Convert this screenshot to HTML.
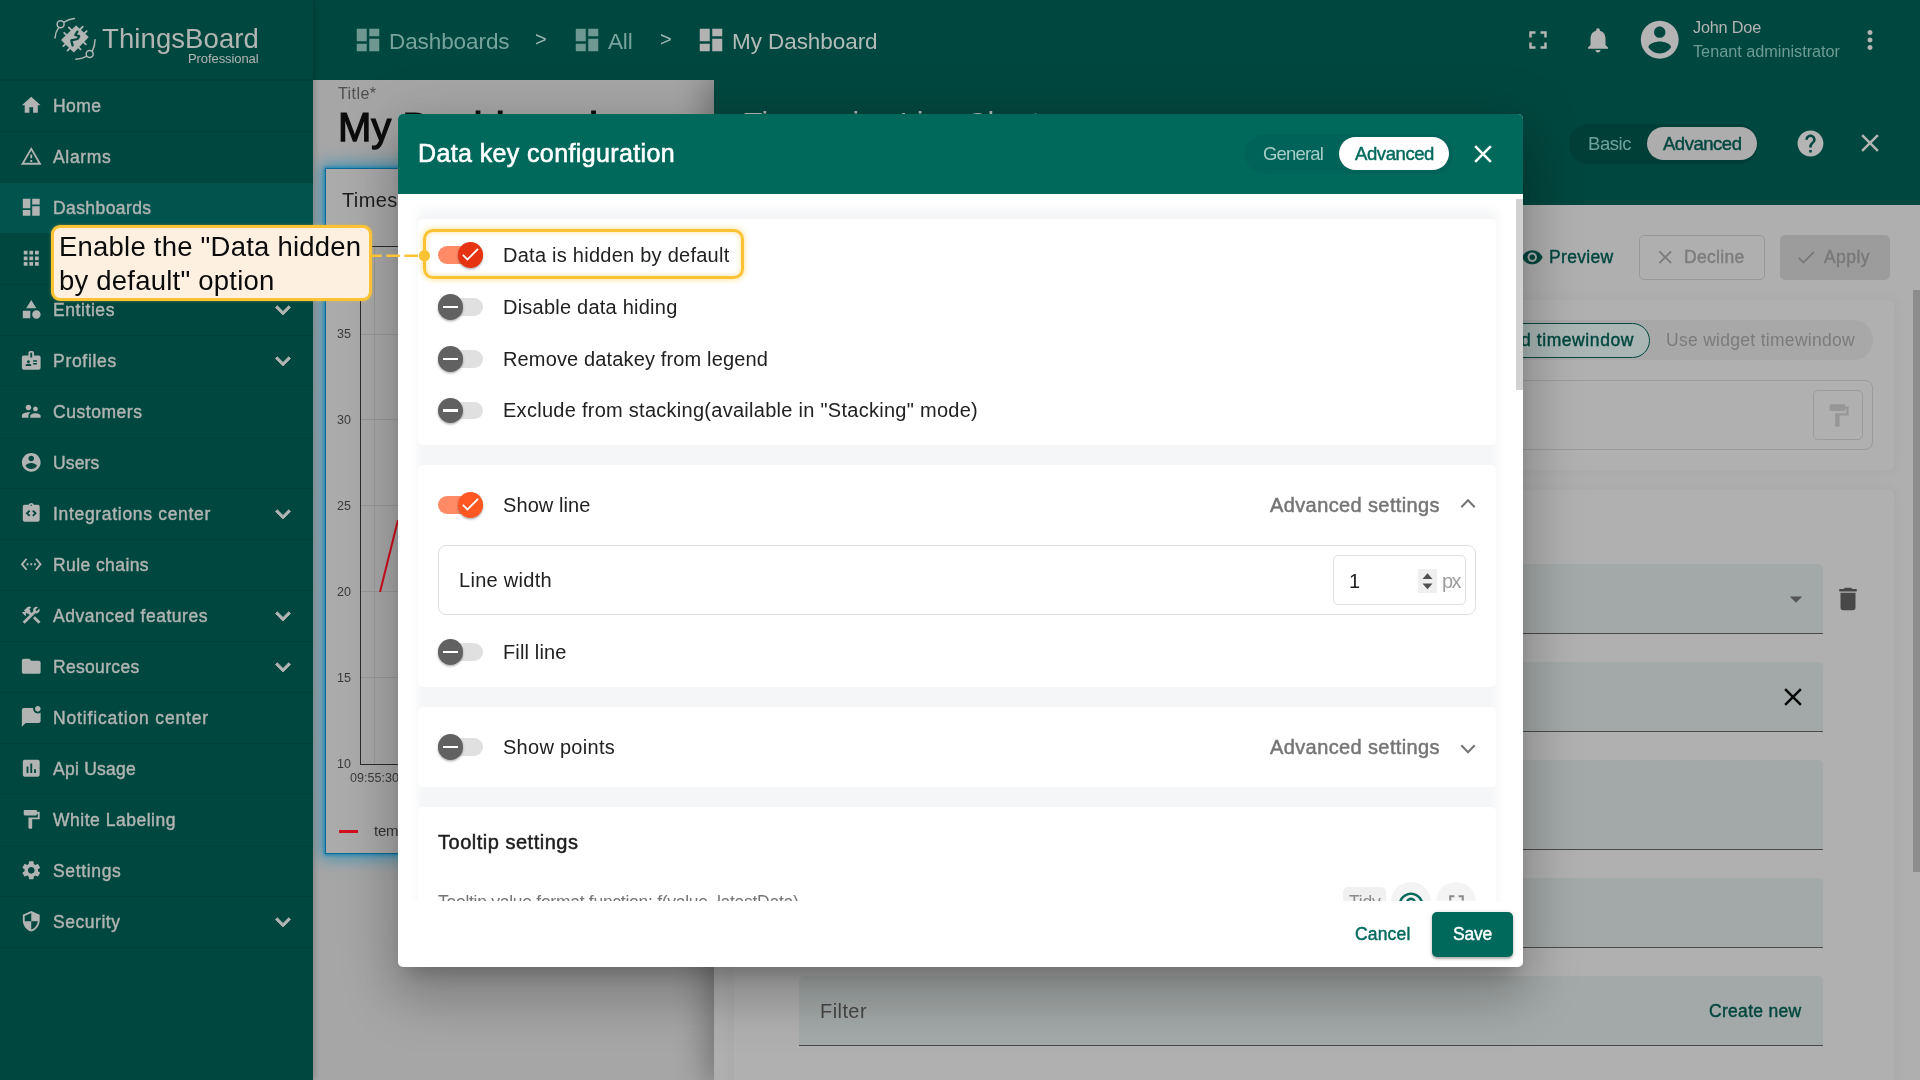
<!DOCTYPE html>
<html lang="en"><head><meta charset="utf-8"><title>ThingsBoard - Data key configuration</title>
<style>
html,body{margin:0;padding:0}
body{width:1920px;height:1080px;overflow:hidden;position:relative;background:#a5a5a5;font-family:"Liberation Sans",sans-serif}
div,span,svg{position:absolute;box-sizing:border-box}
span{white-space:nowrap;display:block;will-change:transform}
.clip{overflow:hidden}
</style></head><body>

<div style="left:313px;top:80px;width:401px;height:1000px;background:#a6a6a6"></div>
<span style="left:338px;top:83.00px;line-height:21px;font-size:16px;color:#4f4f4f;letter-spacing:0.440px;">Title*</span>
<span style="left:338.3px;top:102.00px;line-height:50px;font-size:40px;color:#0c0c0c;-webkit-text-stroke:1.25px #0c0c0c;">My Dashboard</span>
<div style="left:324.8px;top:167.5px;width:420px;height:686.5px;background:#ababab;border:1px solid #0a6a98;box-shadow:0 0 15px 4px rgba(45,145,185,.85), 0 0 3px 1px #0d78a8"></div>
<span style="left:341.7px;top:187.00px;line-height:26px;font-size:20px;color:#1d1d1d;letter-spacing:.4px;">Timeseries Line Chart</span>
<span style="left:337px;top:326.20px;line-height:16px;font-size:12.5px;color:#3a3a3a;letter-spacing:0.048px;">35</span>
<div style="left:361px;top:334px;width:60px;height:1px;background:#9b9b9b"></div>
<span style="left:337px;top:412.10px;line-height:16px;font-size:12.5px;color:#3a3a3a;letter-spacing:0.048px;">30</span>
<div style="left:361px;top:419px;width:60px;height:1px;background:#9b9b9b"></div>
<span style="left:337px;top:498.00px;line-height:16px;font-size:12.5px;color:#3a3a3a;letter-spacing:0.048px;">25</span>
<div style="left:361px;top:505px;width:60px;height:1px;background:#9b9b9b"></div>
<span style="left:337px;top:583.90px;line-height:16px;font-size:12.5px;color:#3a3a3a;letter-spacing:0.048px;">20</span>
<div style="left:361px;top:591px;width:60px;height:1px;background:#9b9b9b"></div>
<span style="left:337px;top:669.80px;line-height:16px;font-size:12.5px;color:#3a3a3a;letter-spacing:0.048px;">15</span>
<div style="left:361px;top:677px;width:60px;height:1px;background:#9b9b9b"></div>
<span style="left:337px;top:755.70px;line-height:16px;font-size:12.5px;color:#3a3a3a;letter-spacing:0.048px;">10</span>
<div style="left:360px;top:246px;width:1px;height:519px;background:#2b2b2b"></div>
<div style="left:360px;top:246px;width:60px;height:1px;background:#2b2b2b"></div>
<div style="left:360px;top:764px;width:60px;height:1px;background:#2b2b2b"></div>
<div style="left:374px;top:247px;width:1px;height:517px;background:#9b9b9b"></div>
<svg style="left:370px;top:500px" width="40" height="100" viewBox="0 0 40 100"><path d="M10 92 L28 20" stroke="#d3101e" stroke-width="2" fill="none"/></svg>
<span style="left:349.5px;top:769.50px;line-height:16px;font-size:12.5px;color:#3a3a3a;letter-spacing:0.043px;">09:55:30</span>
<div style="left:339px;top:830px;width:19px;height:3.2px;background:#d3101e"></div>
<span style="left:374px;top:821.00px;line-height:20px;font-size:15px;color:#333;letter-spacing:-0.262px;">temperature</span>
<div style="left:714px;top:80px;width:1206px;height:1000px;background:#afafaf;box-shadow:-4px 0 30px 4px rgba(0,0,0,.30)"></div>
<div style="left:714px;top:80px;width:1206px;height:125px;background:#00473f"></div>
<span style="left:744px;top:103.00px;line-height:40px;font-size:30px;color:#b4b4b4;letter-spacing:0.175px;">Timeseries Line Chart</span>
<div style="left:1569px;top:123.5px;width:189px;height:40px;background:#003f38;border-radius:20px"></div>
<span style="left:1587.5px;top:131.50px;line-height:24px;font-size:18.5px;color:#6fa39c;letter-spacing:-0.448px;">Basic</span>
<div style="left:1647px;top:126.5px;width:110px;height:33px;background:#adadad;border-radius:17px"></div>
<span style="left:1662.5px;top:131.50px;line-height:24px;font-size:18.5px;color:#00473f;-webkit-text-stroke:0.44px #00473f;letter-spacing:-0.473px;">Advanced</span>
<svg style="left:1794.50px;top:127.50px;" width="31" height="31" viewBox="0 0 24 24"><path fill="#b4b4b4" d="M12 2C6.48 2 2 6.48 2 12s4.48 10 10 10 10-4.48 10-10S17.52 2 12 2zm1 17h-2v-2h2v2zm2.07-7.75l-.9.92C13.45 12.9 13 13.5 13 15h-2v-.5c0-1.1.45-2.1 1.17-2.83l1.24-1.26c.37-.36.59-.86.59-1.41 0-1.1-.9-2-2-2s-2 .9-2 2H8c0-2.21 1.79-4 4-4s4 1.79 4 4c0 .88-.36 1.68-.93 2.25z"/></svg>
<svg style="left:1855.00px;top:128.00px;" width="30" height="30" viewBox="0 0 24 24"><path fill="#b4b4b4" d="M19 6.41L17.59 5 12 10.59 6.41 5 5 6.41 10.59 12 5 17.59 6.41 19 12 13.41 17.59 19 19 17.59 13.41 12z"/></svg>
<svg style="left:1520.75px;top:245.75px;" width="22.5" height="22.5" viewBox="0 0 24 24"><path fill="#00473f" d="M12 4.5C7 4.5 2.73 7.61 1 12c1.73 4.39 6 7.5 11 7.5s9.27-3.11 11-7.5c-1.73-4.39-6-7.5-11-7.5zM12 17c-2.76 0-5-2.24-5-5s2.24-5 5-5 5 2.24 5 5-2.24 5-5 5zm0-8c-1.66 0-3 1.34-3 3s1.34 3 3 3 3-1.34 3-3-1.34-3-3-3z"/></svg>
<span style="left:1549px;top:246.00px;line-height:23px;font-size:17.5px;color:#00473f;-webkit-text-stroke:0.42px #00473f;letter-spacing:0.322px;">Preview</span>
<div style="left:1639px;top:235px;width:126px;height:45px;border:1px solid #989898;border-radius:5px"></div>
<svg style="left:1654.25px;top:245.75px;" width="22.5" height="22.5" viewBox="0 0 24 24"><path fill="#7c7c7c" d="M19 6.41L17.59 5 12 10.59 6.41 5 5 6.41 10.59 12 5 17.59 6.41 19 12 13.41 17.59 19 19 17.59 13.41 12z"/></svg>
<span style="left:1683.5px;top:246.00px;line-height:23px;font-size:17.5px;color:#7c7c7c;-webkit-text-stroke:0.42px #7c7c7c;letter-spacing:0.305px;">Decline</span>
<div style="left:1780px;top:235px;width:110px;height:45px;background:#9c9c9c;border-radius:5px"></div>
<svg style="left:1794.75px;top:245.75px;" width="22.5" height="22.5" viewBox="0 0 24 24"><path fill="#787878" d="M9 16.17L4.83 12l-1.42 1.41L9 19 21 7l-1.41-1.41z"/></svg>
<span style="left:1823.5px;top:246.00px;line-height:23px;font-size:17.5px;color:#787878;-webkit-text-stroke:0.42px #787878;letter-spacing:0.445px;">Apply</span>
<div style="left:734px;top:300px;width:1160px;height:170px;background:#b0b0b0;border-radius:5px;box-shadow:0 0 10px 5px rgba(0,0,0,.022)"></div>
<div style="left:734px;top:489.5px;width:1160px;height:640px;background:#b0b0b0;border-radius:5px;box-shadow:0 0 10px 5px rgba(0,0,0,.022)"></div>
<div style="left:1300px;top:320px;width:573px;height:40px;background:#a8a8a8;border-radius:20px"></div>
<div style="left:1350px;top:323px;width:300px;height:34.5px;background:#a9b6b4;border:1.5px solid #00473f;border-radius:18px"></div>
<span style="left:1405px;top:329.00px;line-height:23px;font-size:17.5px;color:#00473f;-webkit-text-stroke:0.42px #00473f;letter-spacing:0.584px;">Use dashboard timewindow</span>
<span style="left:1665.5px;top:329.00px;line-height:23px;font-size:17.5px;color:#7b7b7b;letter-spacing:0.293px;">Use widget timewindow</span>
<div style="left:754px;top:380px;width:1119px;height:69.5px;border:1px solid #9b9b9b;border-radius:8px"></div>
<div style="left:1813px;top:390px;width:50px;height:50px;border:1px solid #9b9b9b;border-radius:5px"></div>
<svg style="left:1824.50px;top:401.50px;" width="27" height="27" viewBox="0 0 24 24"><path fill="#979797" d="M18 4V3c0-.55-.45-1-1-1H5c-.55 0-1 .45-1 1v4c0 .55.45 1 1 1h12c.55 0 1-.45 1-1V6h1v4H9v11c0 .55.45 1 1 1h2c.55 0 1-.45 1-1v-9h8V4h-3z"/></svg>
<div style="left:799px;top:564px;width:1024px;height:69.5px;background:#a3a9a8;border-bottom:1px solid #4a4a4a;border-radius:5px 5px 0 0"></div>
<svg style="left:1781.00px;top:584.00px;" width="30" height="30" viewBox="0 0 24 24"><path fill="#555" d="M7 10l5 5 5-5z"/></svg>
<svg style="left:1832.50px;top:584.00px;" width="30" height="30" viewBox="0 0 24 24"><path fill="#484848" d="M6 19c0 1.1.9 2 2 2h8c1.1 0 2-.9 2-2V7H6v12zM19 4h-3.5l-1-1h-5l-1 1H5v2h14V4z"/></svg>
<div style="left:799px;top:662px;width:1024px;height:69.5px;background:#a3a9a8;border-bottom:1px solid #4a4a4a;border-radius:5px 5px 0 0"></div>
<svg style="left:1777.50px;top:682.00px;" width="30" height="30" viewBox="0 0 24 24"><path fill="#0a0a0a" d="M19 6.41L17.59 5 12 10.59 6.41 5 5 6.41 10.59 12 5 17.59 6.41 19 12 13.41 17.59 19 19 17.59 13.41 12z"/></svg>
<div style="left:799px;top:760px;width:1024px;height:89.5px;background:#a3a9a8;border-bottom:1px solid #4a4a4a;border-radius:5px 5px 0 0"></div>
<div style="left:799px;top:878px;width:1024px;height:69.5px;background:#a3a9a8;border-bottom:1px solid #4a4a4a;border-radius:5px 5px 0 0"></div>
<div style="left:799px;top:976px;width:1024px;height:69.5px;background:#a3a9a8;border-bottom:1px solid #4a4a4a;border-radius:5px 5px 0 0"></div>
<span style="left:819.5px;top:998.00px;line-height:26px;font-size:20px;color:#474747;letter-spacing:0.426px;">Filter</span>
<span style="left:1709px;top:999.50px;line-height:23px;font-size:17.5px;color:#00473f;-webkit-text-stroke:0.42px #00473f;letter-spacing:0.301px;">Create new</span>
<div style="left:1913px;top:290px;width:7px;height:582px;background:#8c8c8c"></div>
<div style="left:313px;top:0px;width:1607px;height:80px;background:#00473f"></div>
<svg style="left:352.50px;top:25.00px;" width="30" height="30" viewBox="0 0 24 24"><path fill="#6f9892" d="M3 13h8V3H3v10zm0 8h8v-6H3v6zm10 0h8V11h-8v10zm0-18v6h8V3h-8z"/></svg>
<span style="left:388.5px;top:27.00px;line-height:29px;font-size:22.5px;color:#78a39d;letter-spacing:-0.083px;">Dashboards</span>
<span style="left:535px;top:25.50px;line-height:26px;font-size:20px;color:#9db5b1;letter-spacing:-0.180px;">&gt;</span>
<svg style="left:571.50px;top:25.00px;" width="30" height="30" viewBox="0 0 24 24"><path fill="#6f9892" d="M3 13h8V3H3v10zm0 8h8v-6H3v6zm10 0h8V11h-8v10zm0-18v6h8V3h-8z"/></svg>
<span style="left:608px;top:27.00px;line-height:29px;font-size:22.5px;color:#78a39d;letter-spacing:-0.169px;">All</span>
<span style="left:659.5px;top:25.50px;line-height:26px;font-size:20px;color:#9db5b1;letter-spacing:-0.180px;">&gt;</span>
<svg style="left:695.50px;top:25.00px;" width="30" height="30" viewBox="0 0 24 24"><path fill="#b2b2b2" d="M3 13h8V3H3v10zm0 8h8v-6H3v6zm10 0h8V11h-8v10zm0-18v6h8V3h-8z"/></svg>
<span style="left:731.5px;top:27.00px;line-height:29px;font-size:22.5px;color:#b3bbb9;letter-spacing:-0.068px;">My Dashboard</span>
<svg style="left:1522.50px;top:25.00px;" width="30" height="30" viewBox="0 0 24 24"><path fill="#b4b4b4" d="M7 14H5v5h5v-2H7v-3zm-2-4h2V7h3V5H5v5zm12 7h-3v2h5v-5h-2v3zM14 5v2h3v3h2V5h-5z"/></svg>
<svg style="left:1582.50px;top:25.00px;" width="30" height="30" viewBox="0 0 24 24"><path fill="#b4b4b4" d="M12 22c1.1 0 2-.9 2-2h-4c0 1.1.89 2 2 2zm6-6v-5c0-3.07-1.64-5.64-4.5-6.32V4c0-.83-.67-1.5-1.5-1.5s-1.5.67-1.5 1.5v.68C7.63 5.36 6 7.92 6 11v5l-2 2v1h16v-1l-2-2z"/></svg>
<svg style="left:1637.25px;top:17.25px;" width="45.5" height="45.5" viewBox="0 0 24 24"><path fill="#b4b4b4" d="M12 2C6.48 2 2 6.48 2 12s4.48 10 10 10 10-4.48 10-10S17.52 2 12 2zm0 3c1.66 0 3 1.34 3 3s-1.34 3-3 3-3-1.34-3-3 1.34-3 3-3zm0 14.2c-2.5 0-4.71-1.28-6-3.22.03-1.99 4-3.08 6-3.08 1.99 0 5.97 1.09 6 3.08-1.29 1.94-3.5 3.22-6 3.22z"/></svg>
<span style="left:1692.5px;top:17.00px;line-height:21px;font-size:16.25px;color:#b4b4b4;letter-spacing:-0.195px;">John Doe</span>
<span style="left:1692.5px;top:41.00px;line-height:21px;font-size:16.25px;color:#6d9c95;letter-spacing:-0.012px;">Tenant administrator</span>
<svg style="left:1855.00px;top:25.00px;" width="30" height="30" viewBox="0 0 24 24"><path fill="#b4b4b4" d="M12 8c1.1 0 2-.9 2-2s-.9-2-2-2-2 .9-2 2 .9 2 2 2zm0 2c-1.1 0-2 .9-2 2s.9 2 2 2 2-.9 2-2-.9-2-2-2zm0 6c-1.1 0-2 .9-2 2s.9 2 2 2 2-.9 2-2-.9-2-2-2z"/></svg>
<div style="left:0px;top:0px;width:313px;height:1080px;background:#00473f;box-shadow:2px 0 6px rgba(0,0,0,.18)"></div>
<div style="left:0px;top:79px;width:313px;height:2px;background:rgba(0,0,0,.10)"></div>
<svg style="left:50px;top:14px" width="50" height="50" viewBox="0 0 50 50" fill="none" stroke="#b1b5b4" stroke-width="1.5" stroke-linecap="round">
<circle cx="10.6" cy="10.2" r="3.5"/>
<path d="M14 8.2 C17 6.2 20.4 5 24.4 4.6"/>
<path d="M8.6 13.6 C6.4 16.6 5.3 20 5 24"/>
<circle cx="39.7" cy="39.9" r="3.5"/>
<path d="M42.3 37 C44.2 33.4 45 29.6 45 25.7"/>
<path d="M36.5 42.4 C33.2 44.2 29.6 45 25.8 45.2"/>
<g stroke-width="1.8">
<path d="M21.7 16.3 L18.9 13.5"/><path d="M17 21.6 L14.2 18.8"/>
<path d="M30 15.5 L32.8 12.7"/><path d="M33.9 19.9 L36.7 17.1"/>
<path d="M16.1 29.3 L13.3 32.1"/><path d="M20.3 33.8 L17.5 36.6"/>
<path d="M33 27.6 L35.8 30.4"/><path d="M27.8 32.6 L30.6 35.4"/>
</g>
<path d="M11.9 26 L26.1 12.1 L38 23.2 L23.9 37.7 Z" fill="#b1b5b4" stroke-linejoin="round" stroke-width="1.2"/>
<path d="M27.4 17.6 L25.3 21 L29.2 22.2 L27.6 25 L21.3 26.4 L22.6 31.4" stroke="#00473f" stroke-width="2.3" stroke-linejoin="round"/>
</svg>
<span style="left:101.5px;top:21.50px;line-height:34px;font-size:27.5px;color:#b1b5b4;letter-spacing:0.097px;">ThingsBoard</span>
<span style="left:187.5px;top:50.50px;line-height:16px;font-size:13px;color:#b1b5b4;letter-spacing:-0.087px;">Professional</span>
<div style="left:0px;top:131px;width:313px;height:1px;background:rgba(0,0,0,.07)"></div>
<svg style="left:19.75px;top:94.25px;" width="22.5" height="22.5" viewBox="0 0 24 24"><path fill="#b1b4b3" d="M10 20v-6h4v6h5v-8h3L12 3 2 12h3v8z"/></svg>
<span style="left:52.5px;top:94.50px;line-height:23px;font-size:17.5px;color:#b1b4b3;-webkit-text-stroke:0.42px #b1b4b3;letter-spacing:0.454px;">Home</span>
<div style="left:0px;top:182px;width:313px;height:1px;background:rgba(0,0,0,.07)"></div>
<svg style="left:19.75px;top:145.25px;" width="22.5" height="22.5" viewBox="0 0 24 24"><path fill="#b1b4b3" d="M12 5.99L19.53 19H4.47L12 5.99M12 2L1 21h22L12 2zm1 14h-2v2h2v-2zm0-6h-2v4h2v-4z"/></svg>
<span style="left:52.5px;top:145.50px;line-height:23px;font-size:17.5px;color:#b1b4b3;-webkit-text-stroke:0.42px #b1b4b3;letter-spacing:0.675px;">Alarms</span>
<div style="left:0px;top:183px;width:313px;height:50px;background:#00544e"></div>
<svg style="left:19.75px;top:196.25px;" width="22.5" height="22.5" viewBox="0 0 24 24"><path fill="#b1b4b3" d="M3 13h8V3H3v10zm0 8h8v-6H3v6zm10 0h8V11h-8v10zm0-18v6h8V3h-8z"/></svg>
<span style="left:52.5px;top:196.50px;line-height:23px;font-size:17.5px;color:#b1b4b3;-webkit-text-stroke:0.42px #b1b4b3;letter-spacing:0.414px;">Dashboards</span>
<div style="left:0px;top:284px;width:313px;height:1px;background:rgba(0,0,0,.07)"></div>
<svg style="left:19.75px;top:247.25px;" width="22.5" height="22.5" viewBox="0 0 24 24"><path fill="#b1b4b3" d="M4 8h4V4H4v4zm6 12h4v-4h-4v4zm-6 0h4v-4H4v4zm0-6h4v-4H4v4zm6 0h4v-4h-4v4zm6-10v4h4V4h-4zm-6 4h4V4h-4v4zm6 6h4v-4h-4v4zm0 6h4v-4h-4v4z"/></svg>
<span style="left:52.5px;top:247.50px;line-height:23px;font-size:17.5px;color:#b1b4b3;-webkit-text-stroke:0.42px #b1b4b3;letter-spacing:0.335px;">Solution templates</span>
<div style="left:0px;top:335px;width:313px;height:1px;background:rgba(0,0,0,.07)"></div>
<svg style="left:19.75px;top:298.25px;" width="22.5" height="22.5" viewBox="0 0 24 24"><path fill="#b1b4b3" d="M12 2l-5.5 9h11L12 2zm5.5 11c-2.49 0-4.5 2.01-4.5 4.5s2.01 4.5 4.5 4.5 4.5-2.01 4.5-4.5-2.01-4.5-4.5-4.5zM3 21.5h8v-8H3v8z"/></svg>
<span style="left:52.5px;top:298.50px;line-height:23px;font-size:17.5px;color:#b1b4b3;-webkit-text-stroke:0.42px #b1b4b3;letter-spacing:0.576px;">Entities</span>
<svg style="left:267.5px;top:295.0px" width="30" height="30" viewBox="0 0 24 24"><path fill="#b1b4b3" stroke="#b1b4b3" stroke-width="0.7" d="M16.59 8.59L12 13.17 7.41 8.59 6 10l6 6 6-6z"/></svg>
<div style="left:0px;top:386px;width:313px;height:1px;background:rgba(0,0,0,.07)"></div>
<svg style="left:19.75px;top:349.25px;" width="22.5" height="22.5" viewBox="0 0 24 24"><path fill="#b1b4b3" d="M20 7h-5V4c0-1.1-.9-2-2-2h-2c-1.1 0-2 .9-2 2v3H4c-1.1 0-2 .9-2 2v11c0 1.1.9 2 2 2h16c1.1 0 2-.9 2-2V9c0-1.1-.9-2-2-2zM9 12c.83 0 1.5.67 1.5 1.5S9.83 15 9 15s-1.500-.67-1.500-1.500S8.170 12 9 12zm3 6H6v-.75c0-1 2-1.500 3-1.500s3 .5 3 1.500V18zm1-9h-2V4h2v5zm5 7.500h-4V15h4v1.500zm0-3h-4V12h4v1.500z"/></svg>
<span style="left:52.5px;top:349.50px;line-height:23px;font-size:17.5px;color:#b1b4b3;-webkit-text-stroke:0.42px #b1b4b3;letter-spacing:0.706px;">Profiles</span>
<svg style="left:267.5px;top:346.0px" width="30" height="30" viewBox="0 0 24 24"><path fill="#b1b4b3" stroke="#b1b4b3" stroke-width="0.7" d="M16.59 8.59L12 13.17 7.41 8.59 6 10l6 6 6-6z"/></svg>
<div style="left:0px;top:437px;width:313px;height:1px;background:rgba(0,0,0,.07)"></div>
<svg style="left:19.75px;top:400.25px;" width="22.5" height="22.5" viewBox="0 0 24 24"><path fill="#b1b4b3" d="M16.5 12c1.38 0 2.49-1.12 2.49-2.5S17.88 7 16.5 7C15.12 7 14 8.12 14 9.5s1.12 2.5 2.5 2.5zM9 11c1.66 0 2.99-1.34 2.99-3S10.66 5 9 5C7.34 5 6 6.34 6 8s1.34 3 3 3zm7.5 3c-1.83 0-5.5.92-5.5 2.75V19h11v-2.25c0-1.83-3.67-2.75-5.5-2.75zM9 13c-2.33 0-7 1.17-7 3.5V19h7v-2.25c0-.85.33-2.34 2.37-3.47C10.5 13.1 9.66 13 9 13z"/></svg>
<span style="left:52.5px;top:400.50px;line-height:23px;font-size:17.5px;color:#b1b4b3;-webkit-text-stroke:0.42px #b1b4b3;letter-spacing:0.544px;">Customers</span>
<div style="left:0px;top:488px;width:313px;height:1px;background:rgba(0,0,0,.07)"></div>
<svg style="left:19.75px;top:451.25px;" width="22.5" height="22.5" viewBox="0 0 24 24"><path fill="#b1b4b3" d="M12 2C6.48 2 2 6.48 2 12s4.48 10 10 10 10-4.48 10-10S17.52 2 12 2zm0 3c1.66 0 3 1.34 3 3s-1.34 3-3 3-3-1.34-3-3 1.34-3 3-3zm0 14.2c-2.5 0-4.71-1.28-6-3.22.03-1.99 4-3.08 6-3.08 1.99 0 5.97 1.09 6 3.08-1.29 1.94-3.5 3.22-6 3.22z"/></svg>
<span style="left:52.5px;top:451.50px;line-height:23px;font-size:17.5px;color:#b1b4b3;-webkit-text-stroke:0.42px #b1b4b3;letter-spacing:0.160px;">Users</span>
<div style="left:0px;top:539px;width:313px;height:1px;background:rgba(0,0,0,.07)"></div>
<svg style="left:19.75px;top:502.25px;" width="22.5" height="22.5" viewBox="0 0 24 24"><path fill="#b1b4b3" d="M19 3h-4.18C14.4 1.84 13.3 1 12 1s-2.4.84-2.82 2H5c-.14 0-.27.01-.4.04-.39.08-.74.28-1.01.55-.18.18-.33.4-.43.64-.1.23-.16.49-.16.77v14c0 .27.06.54.16.78s.25.45.43.64c.27.27.62.47 1.01.55.13.02.26.03.4.03h14c1.1 0 2-.9 2-2V5c0-1.1-.9-2-2-2zm-8 11.17l-1.41 1.42L6 12l3.59-3.59L11 9.83 8.83 12 11 14.17zm1-9.92c-.41 0-.75-.34-.75-.75s.34-.75.75-.75.75.34.75.75-.34.75-.75.75zm2.41 11.34L13 14.17 15.17 12 13 9.83l1.41-1.42L18 12l-3.59 3.59z"/></svg>
<span style="left:52.5px;top:502.50px;line-height:23px;font-size:17.5px;color:#b1b4b3;-webkit-text-stroke:0.42px #b1b4b3;letter-spacing:0.687px;">Integrations center</span>
<svg style="left:267.5px;top:499.0px" width="30" height="30" viewBox="0 0 24 24"><path fill="#b1b4b3" stroke="#b1b4b3" stroke-width="0.7" d="M16.59 8.59L12 13.17 7.41 8.59 6 10l6 6 6-6z"/></svg>
<div style="left:0px;top:590px;width:313px;height:1px;background:rgba(0,0,0,.07)"></div>
<svg style="left:19.75px;top:553.25px;" width="22.5" height="22.5" viewBox="0 0 24 24"><path fill="#b1b4b3" d="M7.77 6.76L6.23 5.48.82 12l5.41 6.52 1.54-1.28L3.42 12l4.35-5.24zM7 13h2v-2H7v2zm10-2h-2v2h2v-2zm-6 2h2v-2h-2v2zm6.77-7.52l-1.54 1.28L20.58 12l-4.35 5.24 1.54 1.28L23.18 12l-5.41-6.52z"/></svg>
<span style="left:52.5px;top:553.50px;line-height:23px;font-size:17.5px;color:#b1b4b3;-webkit-text-stroke:0.42px #b1b4b3;letter-spacing:0.414px;">Rule chains</span>
<div style="left:0px;top:641px;width:313px;height:1px;background:rgba(0,0,0,.07)"></div>
<svg style="left:19.75px;top:604.25px;" width="22.5" height="22.5" viewBox="0 0 24 24"><path fill="#b1b4b3" d="M13.78 15.17l2.12-2.12 6 6-2.12 2.12zM17.5 10c1.93 0 3.5-1.57 3.5-3.5 0-.58-.16-1.12-.41-1.6l-2.7 2.7-1.49-1.49 2.7-2.7c-.48-.25-1.02-.41-1.6-.41C15.57 3 14 4.57 14 6.5c0 .41.08.8.21 1.16l-1.85 1.85-1.78-1.78.71-.71-1.41-1.41L12 3.49c-1.17-1.17-3.07-1.17-4.24 0L4.22 7.03l1.41 1.41H2.81l-.71.71 3.54 3.54.71-.71V9.15l1.41 1.41.71-.71 1.78 1.78-7.41 7.41 2.12 2.12L16.34 9.79c.36.13.75.21 1.16.21z"/></svg>
<span style="left:52.5px;top:604.50px;line-height:23px;font-size:17.5px;color:#b1b4b3;-webkit-text-stroke:0.42px #b1b4b3;letter-spacing:0.533px;">Advanced features</span>
<svg style="left:267.5px;top:601.0px" width="30" height="30" viewBox="0 0 24 24"><path fill="#b1b4b3" stroke="#b1b4b3" stroke-width="0.7" d="M16.59 8.59L12 13.17 7.41 8.59 6 10l6 6 6-6z"/></svg>
<div style="left:0px;top:692px;width:313px;height:1px;background:rgba(0,0,0,.07)"></div>
<svg style="left:19.75px;top:655.25px;" width="22.5" height="22.5" viewBox="0 0 24 24"><path fill="#b1b4b3" d="M10 4H4c-1.1 0-1.99.9-1.99 2L2 18c0 1.1.9 2 2 2h16c1.1 0 2-.9 2-2V8c0-1.1-.9-2-2-2h-8l-2-2z"/></svg>
<span style="left:52.5px;top:655.50px;line-height:23px;font-size:17.5px;color:#b1b4b3;-webkit-text-stroke:0.42px #b1b4b3;letter-spacing:0.317px;">Resources</span>
<svg style="left:267.5px;top:652.0px" width="30" height="30" viewBox="0 0 24 24"><path fill="#b1b4b3" stroke="#b1b4b3" stroke-width="0.7" d="M16.59 8.59L12 13.17 7.41 8.59 6 10l6 6 6-6z"/></svg>
<div style="left:0px;top:743px;width:313px;height:1px;background:rgba(0,0,0,.07)"></div>
<svg style="left:19.75px;top:706.25px;" width="22.5" height="22.5" viewBox="0 0 24 24"><path fill="#b1b4b3" d="M22 6.98V16c0 1.1-.9 2-2 2H6l-4 4V4c0-1.1.9-2 2-2h10.1c-.06.32-.1.66-.1 1 0 2.76 2.24 5 5 5 1.13 0 2.16-.39 3-1.02zM16 3c0 1.66 1.34 3 3 3s3-1.34 3-3-1.34-3-3-3-3 1.34-3 3z"/></svg>
<span style="left:52.5px;top:706.50px;line-height:23px;font-size:17.5px;color:#b1b4b3;-webkit-text-stroke:0.42px #b1b4b3;letter-spacing:0.838px;">Notification center</span>
<div style="left:0px;top:794px;width:313px;height:1px;background:rgba(0,0,0,.07)"></div>
<svg style="left:19.75px;top:757.25px;" width="22.5" height="22.5" viewBox="0 0 24 24"><path fill="#b1b4b3" d="M19 3H5c-1.1 0-2 .9-2 2v14c0 1.1.9 2 2 2h14c1.1 0 2-.9 2-2V5c0-1.1-.9-2-2-2zM9 17H7v-7h2v7zm4 0h-2V7h2v10zm4 0h-2v-4h2v4z"/></svg>
<span style="left:52.5px;top:757.50px;line-height:23px;font-size:17.5px;color:#b1b4b3;-webkit-text-stroke:0.42px #b1b4b3;letter-spacing:0.251px;">Api Usage</span>
<div style="left:0px;top:845px;width:313px;height:1px;background:rgba(0,0,0,.07)"></div>
<svg style="left:19.75px;top:808.25px;" width="22.5" height="22.5" viewBox="0 0 24 24"><path fill="#b1b4b3" d="M18 4V3c0-.55-.45-1-1-1H5c-.55 0-1 .45-1 1v4c0 .55.45 1 1 1h12c.55 0 1-.45 1-1V6h1v4H9v11c0 .55.45 1 1 1h2c.55 0 1-.45 1-1v-9h8V4h-3z"/></svg>
<span style="left:52.5px;top:808.50px;line-height:23px;font-size:17.5px;color:#b1b4b3;-webkit-text-stroke:0.42px #b1b4b3;letter-spacing:0.516px;">White Labeling</span>
<div style="left:0px;top:896px;width:313px;height:1px;background:rgba(0,0,0,.07)"></div>
<svg style="left:19.75px;top:859.25px;" width="22.5" height="22.5" viewBox="0 0 24 24"><path fill="#b1b4b3" d="M19.14 12.94c.04-.3.06-.61.06-.94 0-.32-.02-.64-.07-.94l2.03-1.58c.18-.14.23-.41.12-.61l-1.92-3.32c-.12-.22-.37-.29-.59-.22l-2.39.96c-.5-.38-1.03-.7-1.62-.94l-.36-2.54c-.04-.24-.24-.41-.48-.41h-3.84c-.24 0-.43.17-.47.41l-.36 2.54c-.59.24-1.13.57-1.62.94l-2.39-.96c-.22-.08-.47 0-.59.22L2.74 8.87c-.12.21-.08.47.12.61l2.03 1.58c-.05.3-.09.63-.09.94s.02.64.07.94l-2.03 1.58c-.18.14-.23.41-.12.61l1.92 3.32c.12.22.37.29.59.22l2.39-.96c.5.38 1.03.7 1.62.94l.36 2.54c.05.24.24.41.48.41h3.84c.24 0 .44-.17.47-.41l.36-2.54c.59-.24 1.13-.56 1.62-.94l2.39.96c.22.08.47 0 .59-.22l1.920-3.32c.12-.22.07-.47-.12-.61l-2.010-1.58zM12 15.6c-1.98 0-3.6-1.62-3.6-3.6s1.62-3.6 3.6-3.6 3.6 1.62 3.6 3.6-1.62 3.6-3.6 3.6z"/></svg>
<span style="left:52.5px;top:859.50px;line-height:23px;font-size:17.5px;color:#b1b4b3;-webkit-text-stroke:0.42px #b1b4b3;letter-spacing:0.658px;">Settings</span>
<div style="left:0px;top:947px;width:313px;height:1px;background:rgba(0,0,0,.07)"></div>
<svg style="left:19.75px;top:910.25px;" width="22.5" height="22.5" viewBox="0 0 24 24"><path fill="#b1b4b3" d="M12 1L3 5v6c0 5.55 3.84 10.74 9 12 5.16-1.26 9-6.45 9-12V5l-9-4zm0 10.99h7c-.53 4.12-3.28 7.79-7 8.94V12H5V6.3l7-3.11v8.8z"/></svg>
<span style="left:52.5px;top:910.50px;line-height:23px;font-size:17.5px;color:#b1b4b3;-webkit-text-stroke:0.42px #b1b4b3;letter-spacing:0.535px;">Security</span>
<svg style="left:267.5px;top:907.0px" width="30" height="30" viewBox="0 0 24 24"><path fill="#b1b4b3" stroke="#b1b4b3" stroke-width="0.7" d="M16.59 8.59L12 13.17 7.41 8.59 6 10l6 6 6-6z"/></svg>
<div style="left:398px;top:114px;width:1125px;height:853px;background:#fff;border-radius:5px;box-shadow:0 14px 19px -9px rgba(0,0,0,.2),0 30px 54px 4px rgba(0,0,0,.17),0 11px 58px 10px rgba(0,0,0,.12)"></div>
<div style="left:398px;top:114px;width:1125px;height:80px;background:#00695c;border-radius:5px 5px 0 0"></div>
<span style="left:418px;top:137.00px;line-height:32px;font-size:25px;color:#fff;-webkit-text-stroke:0.60px #fff;letter-spacing:0.375px;">Data key configuration</span>
<div style="left:1245px;top:134px;width:207.5px;height:40px;background:#00635a;border-radius:20px"></div>
<span style="left:1262.5px;top:142.00px;line-height:24px;font-size:18.5px;color:#a6cdc8;letter-spacing:-0.831px;">General</span>
<div style="left:1339px;top:137px;width:110px;height:33px;background:#fff;border-radius:17px"></div>
<span style="left:1354.5px;top:142.00px;line-height:24px;font-size:18.5px;color:#00695c;-webkit-text-stroke:0.44px #00695c;letter-spacing:-0.411px;">Advanced</span>
<svg style="left:1467.50px;top:139.00px;" width="30" height="30" viewBox="0 0 24 24"><path fill="#fff" d="M19 6.41L17.59 5 12 10.59 6.41 5 5 6.41 10.59 12 5 17.59 6.41 19 12 13.41 17.59 19 19 17.59 13.41 12z"/></svg>
<div class="clip" style="left:398px;top:194px;width:1125px;height:707px;background:#fff">
<div style="left:26px;top:22px;width:1066px;height:700px;background:#f5f6f7;box-shadow:0 0 9px 7px #f5f6f7"></div>
<div style="left:20px;top:25px;width:1078px;height:225.5px;background:#fff;border-radius:5px"></div>
<div style="left:20px;top:270.5px;width:1078px;height:222.5px;background:#fff;border-radius:5px"></div>
<div style="left:20px;top:513px;width:1078px;height:80px;background:#fff;border-radius:5px"></div>
<div style="left:20px;top:612.5px;width:1078px;height:300px;background:#fff;border-radius:5px"></div>
<div style="left:40px;top:52.25px;width:45px;height:17.5px;background:#ff8a65;border-radius:9px"></div>
<div style="left:60.10000000000002px;top:48.19999999999999px;width:25px;height:25.4px;background:#e63312;border-radius:50%;box-shadow:0 1.5px 2px rgba(0,0,0,.2),0 1px 3px rgba(0,0,0,.14)"></div>
<svg style="left:61.35px;top:49.45px;" width="22.5" height="22.5" viewBox="0 0 24 24"><path fill="#fff" d="M9 16.17L4.83 12l-1.42 1.41L9 19 21 7l-1.41-1.41z"/></svg>
<span style="left:105px;top:47.50px;line-height:26px;font-size:20px;color:#212121;letter-spacing:0.254px;">Data is hidden by default</span>
<div style="left:40px;top:104.25px;width:45px;height:17.5px;background:#e0e0e0;border-radius:9px"></div>
<div style="left:40px;top:100.39999999999998px;width:25px;height:25.2px;background:#616161;border-radius:50%;box-shadow:0 1.5px 2px rgba(0,0,0,.2),0 1px 3px rgba(0,0,0,.14)"></div>
<div style="left:45px;top:111.75px;width:15px;height:2.5px;background:#fff"></div>
<span style="left:105px;top:99.50px;line-height:26px;font-size:20px;color:#212121;letter-spacing:0.230px;">Disable data hiding</span>
<div style="left:40px;top:156.25px;width:45px;height:17.5px;background:#e0e0e0;border-radius:9px"></div>
<div style="left:40px;top:152.39999999999998px;width:25px;height:25.2px;background:#616161;border-radius:50%;box-shadow:0 1.5px 2px rgba(0,0,0,.2),0 1px 3px rgba(0,0,0,.14)"></div>
<div style="left:45px;top:163.75px;width:15px;height:2.5px;background:#fff"></div>
<span style="left:105px;top:151.50px;line-height:26px;font-size:20px;color:#212121;letter-spacing:0.144px;">Remove datakey from legend</span>
<div style="left:40px;top:207.75px;width:45px;height:17.5px;background:#e0e0e0;border-radius:9px"></div>
<div style="left:40px;top:203.89999999999998px;width:25px;height:25.2px;background:#616161;border-radius:50%;box-shadow:0 1.5px 2px rgba(0,0,0,.2),0 1px 3px rgba(0,0,0,.14)"></div>
<div style="left:45px;top:215.25px;width:15px;height:2.5px;background:#fff"></div>
<span style="left:105px;top:203.00px;line-height:26px;font-size:20px;color:#212121;letter-spacing:0.273px;">Exclude from stacking(available in "Stacking" mode)</span>
<div style="left:40px;top:302.25px;width:45px;height:17.5px;background:#ff8a65;border-radius:9px"></div>
<div style="left:60.10000000000002px;top:298.2px;width:25px;height:25.4px;background:#ff5722;border-radius:50%;box-shadow:0 1.5px 2px rgba(0,0,0,.2),0 1px 3px rgba(0,0,0,.14)"></div>
<svg style="left:61.35px;top:299.45px;" width="22.5" height="22.5" viewBox="0 0 24 24"><path fill="#fff" d="M9 16.17L4.83 12l-1.42 1.41L9 19 21 7l-1.41-1.41z"/></svg>
<span style="left:105px;top:297.50px;line-height:26px;font-size:20px;color:#212121;letter-spacing:0.086px;">Show line</span>
<span style="left:872px;top:298.00px;line-height:26px;font-size:20px;color:#757575;-webkit-text-stroke:0.48px #757575;letter-spacing:0.386px;">Advanced settings</span>
<svg style="left:1061px;top:302px" width="18" height="14" viewBox="0 0 18 14"><path d="M2.3 11.2 L9 4.2 L15.7 11.2" fill="none" stroke="#757575" stroke-width="2"/></svg>
<div style="left:40px;top:351px;width:1038px;height:69.5px;border:1px solid #e0e0e0;border-radius:8px"></div>
<span style="left:61px;top:373.00px;line-height:26px;font-size:20px;color:#212121;letter-spacing:0.294px;">Line width</span>
<div style="left:935px;top:361px;width:133px;height:50px;border:1px solid #e0e0e0;border-radius:5px"></div>
<span style="left:951px;top:373.50px;line-height:26px;font-size:20px;color:#212121;">1</span>
<div style="left:1020px;top:375px;width:19px;height:24px;background:#efefef"></div>
<svg style="left:1020px;top:375px" width="19" height="24" viewBox="0 0 19 24"><path d="M4.5 10 L9.5 4.2 L14.5 10 Z M4.5 14.5 L9.5 20.3 L14.5 14.5 Z" fill="#505050"/></svg>
<span style="left:1044px;top:374.00px;line-height:26px;font-size:20px;color:#9e9e9e;letter-spacing:-1.562px;">px</span>
<div style="left:40px;top:449.25px;width:45px;height:17.5px;background:#e0e0e0;border-radius:9px"></div>
<div style="left:40px;top:445.4px;width:25px;height:25.2px;background:#616161;border-radius:50%;box-shadow:0 1.5px 2px rgba(0,0,0,.2),0 1px 3px rgba(0,0,0,.14)"></div>
<div style="left:45px;top:456.75px;width:15px;height:2.5px;background:#fff"></div>
<span style="left:105px;top:444.50px;line-height:26px;font-size:20px;color:#212121;letter-spacing:0.140px;">Fill line</span>
<div style="left:40px;top:544.25px;width:45px;height:17.5px;background:#e0e0e0;border-radius:9px"></div>
<div style="left:40px;top:540.4px;width:25px;height:25.2px;background:#616161;border-radius:50%;box-shadow:0 1.5px 2px rgba(0,0,0,.2),0 1px 3px rgba(0,0,0,.14)"></div>
<div style="left:45px;top:551.75px;width:15px;height:2.5px;background:#fff"></div>
<span style="left:105px;top:540.00px;line-height:26px;font-size:20px;color:#212121;letter-spacing:0.277px;">Show points</span>
<span style="left:872px;top:539.80px;line-height:26px;font-size:20px;color:#757575;-webkit-text-stroke:0.48px #757575;letter-spacing:0.386px;">Advanced settings</span>
<svg style="left:1061px;top:548px" width="18" height="14" viewBox="0 0 18 14"><path d="M2.3 3.2 L9 10.2 L15.7 3.2" fill="none" stroke="#757575" stroke-width="2"/></svg>
<span style="left:40px;top:635.00px;line-height:26px;font-size:20px;color:#1c1c1c;-webkit-text-stroke:0.48px #1c1c1c;letter-spacing:0.513px;">Tooltip settings</span>
<span style="left:40px;top:696.50px;line-height:23px;font-size:17.5px;color:#757575;letter-spacing:-0.274px;">Tooltip value format function: f(value, latestData)</span>
<div style="left:945px;top:693px;width:43px;height:30px;background:#f0f0f0;border-radius:5px"></div>
<span style="left:950.5px;top:696.50px;line-height:23px;font-size:17.5px;color:#8a8a8a;letter-spacing:-0.228px;">Tidy</span>
<div style="left:993px;top:688px;width:40px;height:40px;background:#f4f4f4;border-radius:50%"></div>
<svg style="left:998.00px;top:695.50px;" width="30" height="30" viewBox="0 0 24 24"><path fill="#00695c" d="M11 18h2v-2h-2v2zm1-16C6.48 2 2 6.48 2 12s4.48 10 10 10 10-4.48 10-10S17.52 2 12 2zm0 18c-4.41 0-8-3.59-8-8s3.59-8 8-8 8 3.59 8 8-3.59 8-8 8zm0-14c-2.21 0-4 1.79-4 4h2c0-1.1.9-2 2-2s2 .9 2 2c0 2-3 1.75-3 5h2c0-2.25 3-2.5 3-5 0-2.21-1.79-4-4-4z"/></svg>
<div style="left:1038px;top:688px;width:40px;height:40px;background:#f4f4f4;border-radius:50%"></div>
<svg style="left:1045.50px;top:695.50px;" width="25" height="25" viewBox="0 0 24 24"><path fill="#8a8a8a" d="M7 14H5v5h5v-2H7v-3zm-2-4h2V7h3V5H5v5zm12 7h-3v2h5v-5h-2v3zM14 5v2h3v3h2V5h-5z"/></svg>
<div style="left:1118px;top:5px;width:7px;height:191px;background:#d2d2d2"></div>
</div>
<span style="left:1354.5px;top:922.50px;line-height:23px;font-size:17.5px;color:#00695c;-webkit-text-stroke:0.42px #00695c;letter-spacing:0.171px;">Cancel</span>
<div style="left:1432px;top:912px;width:81px;height:45px;background:#00695c;border-radius:5px;box-shadow:0 2px 2px rgba(0,0,0,.22),0 1px 5px rgba(0,0,0,.18)"></div>
<span style="left:1452.5px;top:922.50px;line-height:23px;font-size:17.5px;color:#fff;-webkit-text-stroke:0.42px #fff;letter-spacing:-0.222px;">Save</span>
<div style="left:423px;top:229px;width:321px;height:50px;border:3px solid #fbc334;border-radius:10px;box-shadow:0 0 5px 1px rgba(251,195,52,.45),inset 0 0 4px 1px rgba(251,195,52,.35)"></div>
<svg style="left:371px;top:250px" width="60" height="12" viewBox="0 0 60 12"><path d="M0 5.7 H52" stroke="#fbc334" stroke-width="2.5" stroke-dasharray="13.5 4.6" stroke-dashoffset="2.8" fill="none"/><circle cx="53.4" cy="5.7" r="5.6" fill="#fbc334"/></svg>
<div style="left:51px;top:225px;width:321px;height:75.5px;background:#fef0e1;border:3px solid #fbc334;border-radius:9px;box-shadow:0 0 3px 0 rgba(251,195,52,.45)"></div>
<span style="left:59px;top:229.50px;line-height:34px;font-size:27.5px;color:#0b0b0b;letter-spacing:0.221px;">Enable the "Data hidden</span>
<span style="left:59px;top:263.70px;line-height:34px;font-size:27.5px;color:#0b0b0b;letter-spacing:0.218px;">by default" option</span>
</body></html>
